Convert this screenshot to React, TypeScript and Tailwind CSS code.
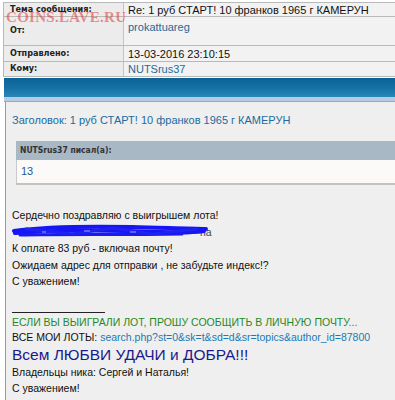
import React from "react";

const verdana = { fontFamily: '"DejaVu Sans Condensed", "DejaVu Sans", Verdana, sans-serif' };
const tahoma = { fontFamily: '"Liberation Sans", Arial, sans-serif' };

function Row({ label, children, h }: { label: string; children: React.ReactNode; h: string }) {
  return (
    <div className={`flex ${h} border-b border-[#b9b9b9]`}>
      <div className="w-[120px] shrink-0 border-r border-[#c4c4c4] bg-[#ececec] pl-[6px] flex items-center">
        <span className="text-[9px] font-bold text-[#222]" style={verdana}>{label}</span>
      </div>
      <div className="flex-1 bg-[#f2f2f2] pl-[4px]">{children}</div>
    </div>
  );
}

export default function App() {
  return (
    <div className="w-[395px] h-[400px] overflow-hidden bg-white relative">
      <div className="pt-[2px] pl-[3px]">
        <div className="border-t border-[#b9b9b9] border-l">
          <Row label="Тема сообщения:" h="h-[14px]">
            <div className="text-[11px] leading-[14px] text-[#111]" style={tahoma}>Re: 1 руб СТАРТ! 10 франков 1965 г КАМЕРУН</div>
          </Row>
          <Row label="От:" h="h-[29px]">
            <div className="text-[11px] leading-[14px] pt-[3px] text-[#1d6a9a]" style={tahoma}>prokattuareg</div>
          </Row>
          <Row label="Отправлено:" h="h-[16px]">
            <div className="text-[11px] leading-[16px] text-[#111]" style={tahoma}>13-03-2016 23:10:15</div>
          </Row>
          <Row label="Кому:" h="h-[15px]">
            <div className="text-[11px] leading-[15px] text-[#1d6a9a]" style={tahoma}>NUTSrus37</div>
          </Row>
        </div>
      </div>
      <div className="absolute left-[6px] top-[6px] text-[15px] font-bold tracking-[0.3px] text-[rgba(220,40,40,0.5)]" style={{ fontFamily: '"Liberation Serif", serif' }}>
        COINS.LAVE.RU
      </div>

      <div className="mt-[1px] ml-[4px]">
        <div className="h-[19px] bg-gradient-to-b from-[#0b6296] via-[#1470a3] to-[#2a87b6]" />
        <div className="h-[4px] bg-[#b7cbe4]" />
        <div className="h-[1px] bg-[#9aa8b0]" />
      </div>

      <div className="ml-[5px] border-l border-[#9a9a9a] bg-[#efefef] h-[400px] pl-[6px]" style={tahoma}>
        <div className="pt-[11px] text-[11px] leading-[14px] text-[#1b6aa0]">Заголовок: 1 руб СТАРТ! 10 франков 1965 г КАМЕРУН</div>
        <div className="mt-[14px] ml-[4px] border-b-2 border-[#c2c2c2]">
          <div className="h-[19px] bg-[#a8b8c5] pl-[4px] flex items-center text-[8.5px] font-bold text-[#333]" style={verdana}>NUTSrus37 писал(а):</div>
          <div className="h-[23px] bg-[#fbfaf9] pl-[4px] border-l border-[#c9c9c9] text-[11px] leading-[22px] text-[#1f5d8a]">13</div>
        </div>
        <div className="mt-[22px] text-[10.5px] leading-[16.5px] text-[#111]">
          <div>Сердечно поздравляю с выигрышем лота!</div>
          <div className="relative h-[16.5px]">
            <span className="absolute left-[188px] top-0 text-[#444]">на</span>
            <svg className="absolute left-0 top-[-1px]" width="200" height="16" viewBox="0 0 200 16">
              <path d="M2 8 C30 4 70 3 120 4 C150 5 175 5 194 6" stroke="#1515f5" strokeWidth="4" fill="none" strokeLinecap="round" />
              <path d="M3 10 C40 7 100 7 150 9 C170 10 185 9 192 8" stroke="#1515f5" strokeWidth="4" fill="none" strokeLinecap="round" />
              <path d="M8 12 C50 11 110 12 170 11" stroke="#1a1aee" strokeWidth="3" fill="none" strokeLinecap="round" />
              <path d="M14 6 L60 11 L100 5 L140 11 L185 6" stroke="#2020f0" strokeWidth="3" fill="none" strokeLinecap="round" strokeLinejoin="round" />
              <path d="M30 9 L34 9 M72 8 L78 8 M118 9 L124 9" stroke="#9aa8ff" strokeWidth="1" fill="none" />
            </svg>
          </div>
          <div>К оплате 83 руб - включая почту!</div>
          <div>Ожидаем адрес для отправки , не забудьте индекс!?</div>
          <div>С уважением!</div>
        </div>
        <div className="mt-[22px] w-[93px] border-t border-[#222]" />
        <div className="text-[10.5px] leading-[15px] mt-[2px] text-[#1f8a1f]">ЕСЛИ ВЫ ВЫИГРАЛИ ЛОТ, ПРОШУ СООБЩИТЬ В ЛИЧНУЮ ПОЧТУ...</div>
        <div className="text-[10.5px] leading-[15px] text-[#111] whitespace-nowrap">
          ВСЕ МОИ ЛОТЫ: <span className="text-[#1b7ab5]">search.php?st=0&amp;sk=t&amp;sd=d&amp;sr=topics&amp;author_id=87800</span>
        </div>
        <div className="text-[15.5px] leading-[19px] text-[#1a1a8c]">Всем ЛЮБВИ УДАЧИ и ДОБРА!!!</div>
        <div className="text-[10.5px] leading-[16px] text-[#111]">
          <div>Владельцы ника: Сергей и Наталья!</div>
          <div>С уважением!</div>
        </div>
      </div>
    </div>
  );
}
